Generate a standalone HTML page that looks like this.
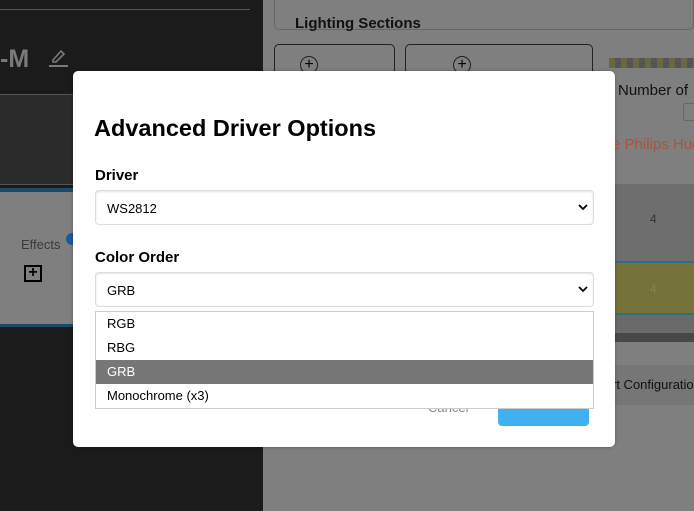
<!DOCTYPE html>
<html><head><style>
*{margin:0;padding:0;box-sizing:border-box}
body{width:694px;height:511px;overflow:hidden;position:relative;font-family:"Liberation Sans",sans-serif;background:#7f7f7f}
.a{position:absolute;white-space:nowrap}
</style></head><body>
<div class="a" style="left:0;top:0;width:263px;height:511px;background:#1b1b1b"></div>
<div class="a" style="left:0;top:9px;width:250px;height:1px;background:#555"></div>
<div class="a" style="left:0;top:45px;font-size:25px;font-weight:bold;color:#7a7a7a">-M</div>
<svg class="a" style="left:48px;top:46px" width="22" height="22" viewBox="0 0 22 22"><path d="M5 14 L13 5 L16 8 L8 16 L5 16 Z" fill="none" stroke="#7a7a7a" stroke-width="1.6"/><path d="M1 20 H20" stroke="#7a7a7a" stroke-width="2"/></svg>
<div class="a" style="left:0;top:94px;width:263px;height:1px;background:#555"></div>
<div class="a" style="left:0;top:95px;width:263px;height:89px;background:#2b2b2b"></div>
<div class="a" style="left:0;top:184px;width:263px;height:1px;background:#555"></div>
<div class="a" style="left:0;top:188px;width:263px;height:4px;background:#1d4a66"></div>
<div class="a" style="left:0;top:192px;width:263px;height:132px;background:#7f7f7f"></div>
<div class="a" style="left:0;top:324px;width:263px;height:3px;background:#1d4a66"></div>
<div class="a" style="left:21px;top:237px;font-size:13px;color:#3a3a3a">Effects</div>
<div class="a" style="left:66px;top:233px;width:12px;height:12px;border-radius:50%;background:#1d5a9a"></div>
<div class="a" style="left:24px;top:265px;width:18px;height:17px;border:2px solid #000;font-size:16px;line-height:12px;text-align:center;font-weight:bold">+</div>
<div class="a" style="left:274px;top:-5px;width:420px;height:35px;border:1px solid #666;border-radius:5px"></div>
<div class="a" style="left:295px;top:15px;font-size:15px;font-weight:bold;color:#111">Lighting Sections</div>
<div class="a" style="left:274px;top:44px;width:121px;height:40px;border:1px solid #222;border-radius:5px"></div>
<div class="a" style="left:405px;top:44px;width:188px;height:40px;border:1px solid #222;border-radius:5px"></div>
<div class="a" style="left:300px;top:56px;width:18px;height:18px;border:1px solid #222;border-radius:50%;font-size:16px;line-height:15px;text-align:center">+</div>
<div class="a" style="left:453px;top:56px;width:18px;height:18px;border:1px solid #222;border-radius:50%;font-size:16px;line-height:15px;text-align:center">+</div>
<div class="a" style="left:609px;top:58px;width:85px;height:10px;background:repeating-linear-gradient(90deg,#6a6840 0 6px,#555 6px 12px)"></div>
<div class="a" style="left:618px;top:82px;font-size:15px;color:#111">Number of</div>
<div class="a" style="left:683px;top:103px;width:20px;height:18px;border:1px solid #666;border-radius:3px"></div>
<div class="a" style="left:612px;top:136px;font-size:15px;color:#a8553e">e Philips Hue</div>
<div class="a" style="left:263px;top:184px;width:431px;height:78px;background:#6e6e6e"></div>
<div class="a" style="left:650px;top:212px;font-size:12px;color:#333">4</div>
<div class="a" style="left:263px;top:261px;width:431px;height:54px;background:#76733a;border-top:2px solid #2f6f84;border-bottom:2px solid #2f6f84"></div>
<div class="a" style="left:650px;top:282px;font-size:12px;color:#888544">4</div>
<div class="a" style="left:263px;top:315px;width:431px;height:18px;background:#6a6a6a"></div>
<div class="a" style="left:263px;top:333px;width:431px;height:9px;background:#484848"></div>
<div class="a" style="left:263px;top:365px;width:431px;height:40px;background:#767676"></div>
<div class="a" style="left:612px;top:377px;font-size:13px;color:#111">rt Configuration</div>
<div class="a" style="left:73px;top:71px;width:542px;height:376px;background:#fff;border-radius:5px;box-shadow:0 0 3px rgba(0,0,0,.3)"></div>
<div class="a" style="left:94px;top:115px;font-size:23.5px;font-weight:bold;color:#000">Advanced Driver Options</div>
<div class="a" style="left:95px;top:167px;font-size:15px;font-weight:bold">Driver</div>
<div class="a" style="left:95px;top:190px;width:499px;height:35px;border:1px solid #ddd;border-radius:4px;box-shadow:inset 0 1px 2px rgba(0,0,0,.1)"></div>
<div class="a" style="left:107px;top:201px;font-size:13px">WS2812</div>
<svg class="a" style="left:578px;top:203px" width="10" height="8"><path d="M1 2 L5 6 L9 2" fill="none" stroke="#000" stroke-width="1.8"/></svg>
<div class="a" style="left:95px;top:249px;font-size:15px;font-weight:bold">Color Order</div>
<div class="a" style="left:95px;top:272px;width:499px;height:35px;border:1px solid #ddd;border-radius:4px;box-shadow:inset 0 1px 2px rgba(0,0,0,.1)"></div>
<div class="a" style="left:107px;top:283px;font-size:13px">GRB</div>
<svg class="a" style="left:578px;top:285px" width="10" height="8"><path d="M1 2 L5 6 L9 2" fill="none" stroke="#000" stroke-width="1.8"/></svg>
<div class="a" style="left:428px;top:400px;font-size:13px;color:#888">Cancel</div>
<div class="a" style="left:498px;top:396px;width:91px;height:30px;background:#3fb0f0;border-radius:4px"></div>
<div class="a" style="left:95px;top:311px;width:499px;height:98px;background:#fff;border:1px solid #ccc;font-size:13px">
<div style="height:24px;line-height:24px;padding-left:11px">RGB</div>
<div style="height:24px;line-height:24px;padding-left:11px">RBG</div>
<div style="height:24px;line-height:24px;padding-left:11px;background:#777;color:#fff">GRB</div>
<div style="height:24px;line-height:24px;padding-left:11px">Monochrome (x3)</div>
</div>
</body></html>
